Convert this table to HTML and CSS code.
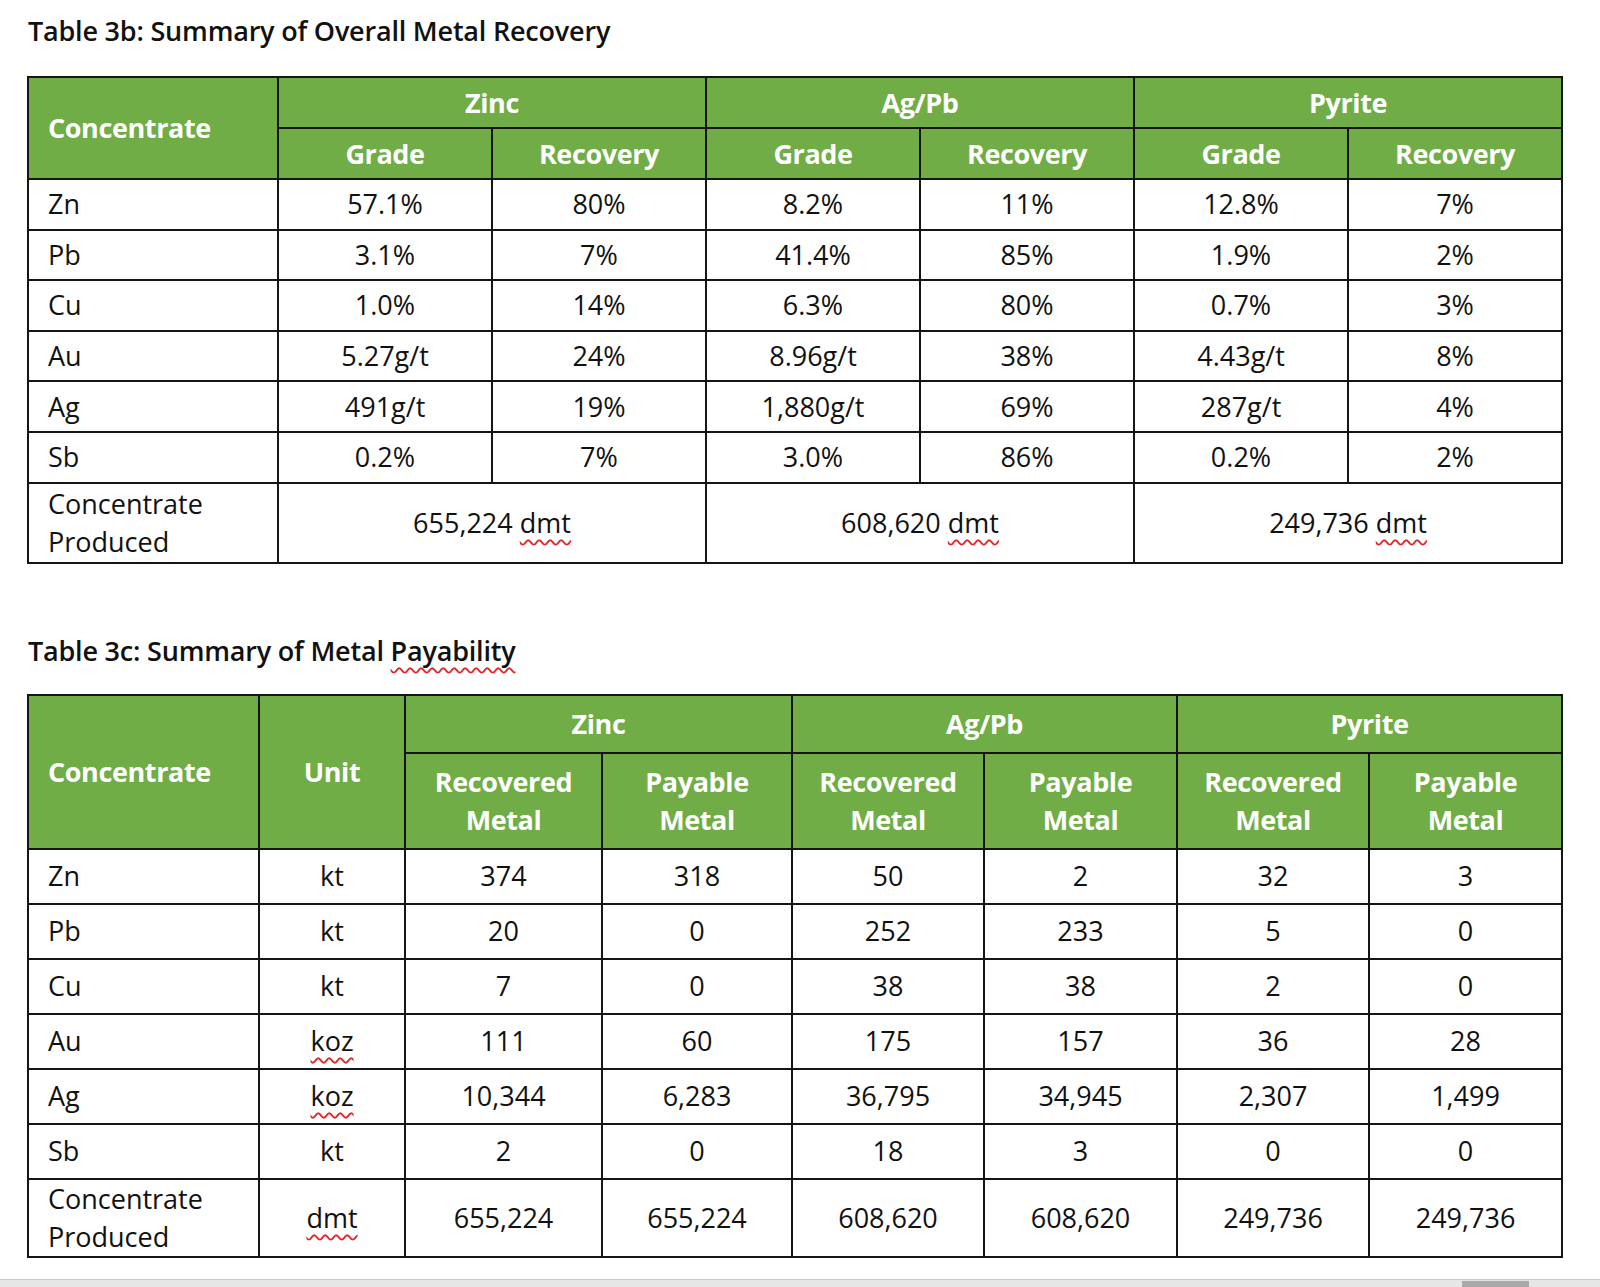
FILE: index.html
```html
<!DOCTYPE html>
<html>
<head>
<meta charset="utf-8">
<link rel="stylesheet" href="styles.css">
</head>
<body>
<div class="page">
  <h2 class="title t1">Table 3b: Summary of Overall Metal Recovery</h2>
  <table class="tbl tbl1">
    <colgroup>
      <col class="c-first1"><col class="c-w1"><col class="c-w1"><col class="c-w1"><col class="c-w1"><col class="c-w1"><col class="c-w1">
    </colgroup>
    <thead>
      <tr class="h1a">
        <th rowspan="2" class="left">Concentrate</th>
        <th colspan="2">Zinc</th>
        <th colspan="2">Ag/Pb</th>
        <th colspan="2">Pyrite</th>
      </tr>
      <tr class="h1b">
        <th>Grade</th><th>Recovery</th>
        <th>Grade</th><th>Recovery</th>
        <th>Grade</th><th>Recovery</th>
      </tr>
    </thead>
    <tbody>
      <tr class="r1"><td class="left">Zn</td><td>57.1%</td><td>80%</td><td>8.2%</td><td>11%</td><td>12.8%</td><td>7%</td></tr>
      <tr class="r1"><td class="left">Pb</td><td>3.1%</td><td>7%</td><td>41.4%</td><td>85%</td><td>1.9%</td><td>2%</td></tr>
      <tr class="r1"><td class="left">Cu</td><td>1.0%</td><td>14%</td><td>6.3%</td><td>80%</td><td>0.7%</td><td>3%</td></tr>
      <tr class="r1"><td class="left">Au</td><td>5.27g/t</td><td>24%</td><td>8.96g/t</td><td>38%</td><td>4.43g/t</td><td>8%</td></tr>
      <tr class="r1"><td class="left">Ag</td><td>491g/t</td><td>19%</td><td>1,880g/t</td><td>69%</td><td>287g/t</td><td>4%</td></tr>
      <tr class="r1"><td class="left">Sb</td><td>0.2%</td><td>7%</td><td>3.0%</td><td>86%</td><td>0.2%</td><td>2%</td></tr>
      <tr class="r1 last"><td class="left">Concentrate<br>Produced</td><td colspan="2">655,224 <span class="spell">dmt</span></td><td colspan="2">608,620 <span class="spell">dmt</span></td><td colspan="2">249,736 <span class="spell">dmt</span></td></tr>
    </tbody>
  </table>

  <h2 class="title t2">Table 3c: Summary of Metal <span class="spell">Payability</span></h2>
  <table class="tbl tbl2">
    <colgroup>
      <col class="c2-a"><col class="c2-b"><col class="c2-c"><col class="c2-d"><col class="c2-e"><col class="c2-f"><col class="c2-g"><col class="c2-h">
    </colgroup>
    <thead>
      <tr class="h2a">
        <th rowspan="2" class="left">Concentrate</th>
        <th rowspan="2">Unit</th>
        <th colspan="2">Zinc</th>
        <th colspan="2">Ag/Pb</th>
        <th colspan="2">Pyrite</th>
      </tr>
      <tr class="h2b">
        <th>Recovered<br>Metal</th><th>Payable<br>Metal</th>
        <th>Recovered<br>Metal</th><th>Payable<br>Metal</th>
        <th>Recovered<br>Metal</th><th>Payable<br>Metal</th>
      </tr>
    </thead>
    <tbody>
      <tr class="r2"><td class="left">Zn</td><td>kt</td><td>374</td><td>318</td><td>50</td><td>2</td><td>32</td><td>3</td></tr>
      <tr class="r2"><td class="left">Pb</td><td>kt</td><td>20</td><td>0</td><td>252</td><td>233</td><td>5</td><td>0</td></tr>
      <tr class="r2"><td class="left">Cu</td><td>kt</td><td>7</td><td>0</td><td>38</td><td>38</td><td>2</td><td>0</td></tr>
      <tr class="r2"><td class="left">Au</td><td><span class="spell">koz</span></td><td>111</td><td>60</td><td>175</td><td>157</td><td>36</td><td>28</td></tr>
      <tr class="r2"><td class="left">Ag</td><td><span class="spell">koz</span></td><td>10,344</td><td>6,283</td><td>36,795</td><td>34,945</td><td>2,307</td><td>1,499</td></tr>
      <tr class="r2"><td class="left">Sb</td><td>kt</td><td>2</td><td>0</td><td>18</td><td>3</td><td>0</td><td>0</td></tr>
      <tr class="r2 last"><td class="left">Concentrate<br>Produced</td><td><span class="spell">dmt</span></td><td>655,224</td><td>655,224</td><td>608,620</td><td>608,620</td><td>249,736</td><td>249,736</td></tr>
    </tbody>
  </table>
</div>
<div class="hscroll"><div class="thumb"></div></div>
</body>
</html>
```

FILE: styles.css
```css
html, body {
  margin: 0;
  padding: 0;
  background: #ffffff;
}
body {
  width: 1600px;
  height: 1287px;
  position: relative;
  overflow: hidden;
  font-family: "Open Sans", "Noto Sans", sans-serif;
  color: #111;
}
.page {
  padding-left: 27px;
}
.title {
  margin: 0;
  padding-left: 1px;
  font-size: 27px;
  font-weight: 600;
  color: #111;
  letter-spacing: -0.2px;
  line-height: 36px;
}
.t1 {
  padding-top: 13px;
  height: 36px;
  margin-bottom: 27px;
}
.t2 {
  margin-top: 69px;
  height: 36px;
  margin-bottom: 25px;
}
.tbl {
  border-collapse: collapse;
  table-layout: fixed;
  width: 1534px;
  font-size: 27px;
}
.tbl th, .tbl td {
  border: 2px solid #151515;
  padding: 0;
  text-align: center;
  vertical-align: middle;
  line-height: 38px;
}
.tbl th {
  background: #70ad47;
  color: #ffffff;
  font-weight: 700;
  letter-spacing: -0.4px;
}
.tbl td {
  font-weight: 400;
  color: #111;
}
.tbl .left {
  text-align: left;
  padding-left: 19px;
}
.c-first1 { width: 250px; }
.c-w1 { width: 214px; }
.h1a { height: 51px; }
.h1b { height: 51px; }
.r1 { height: 50.6px; }
.r1.last { height: 80px; }

.c2-a { width: 231px; }
.c2-b { width: 146px; }
.c2-c { width: 197px; }
.c2-d { width: 190px; }
.c2-e { width: 192px; }
.c2-f { width: 193px; }
.c2-g { width: 192px; }
.c2-h { width: 193px; }
.h2a { height: 58px; }
.h2b { height: 96px; }
.r2 { height: 55px; }
.r2.last { height: 78px; }

.spell {
  text-decoration: underline wavy #e0282a;
  text-decoration-thickness: 1.5px;
  text-underline-offset: 6px;
  text-decoration-skip-ink: none;
}
.hscroll {
  position: absolute;
  left: 0;
  right: 0;
  bottom: 0;
  height: 7px;
  background: #e6e6e6;
  border-top: 1px solid #c9c9c9;
}
.thumb {
  position: absolute;
  left: 1462px;
  width: 67px;
  top: 1px;
  bottom: 0;
  background: #a9a9a9;
}
```
